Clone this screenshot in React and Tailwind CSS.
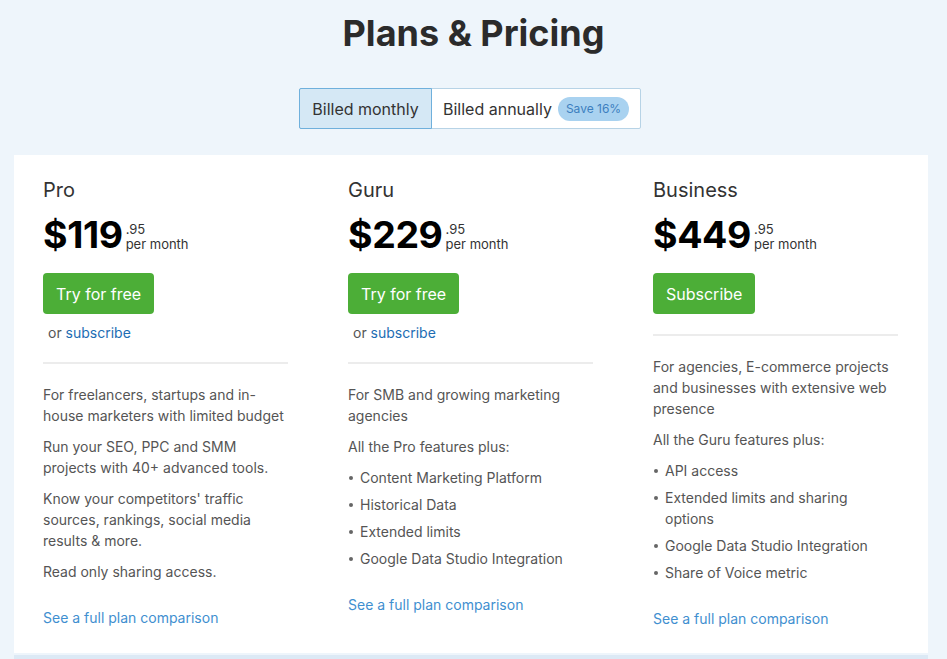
import React from 'react';

// Pricing page: title, billing toggle and three plan columns inside one card.

const plans = [
  {
    name: 'Pro',
    price: '$119',
    cta: 'Try for free',
    alt: true,
    paras: [
      'For freelancers, startups and in-house marketers with limited budget',
      'Run your SEO, PPC and SMM projects with 40+ advanced tools.',
      "Know your competitors' traffic sources, rankings, social media results & more.",
      'Read only sharing access.',
    ],
    bullets: [],
  },
  {
    name: 'Guru',
    price: '$229',
    cta: 'Try for free',
    alt: true,
    paras: ['For SMB and growing marketing agencies', 'All the Pro features plus:'],
    bullets: ['Content Marketing Platform', 'Historical Data', 'Extended limits', 'Google Data Studio Integration'],
  },
  {
    name: 'Business',
    price: '$449',
    cta: 'Subscribe',
    alt: false,
    paras: [
      'For agencies, E-commerce projects and businesses with extensive web presence',
      'All the Guru features plus:',
    ],
    bullets: ['API access', 'Extended limits and sharing options', 'Google Data Studio Integration', 'Share of Voice metric'],
  },
];

function Plan({ plan }) {
  return (
    <div className="flex flex-col">
      <div className="text-[20px] leading-[26px] text-[#333]">{plan.name}</div>
      <div className="mt-[10px] flex items-center h-[44px]">
        <span className="text-[37.5px] leading-[44px] font-bold text-black tracking-[-0.4px]">{plan.price}</span>
        <span className="ml-[3px] flex flex-col text-[13px] leading-[15px] text-[#333] mt-[4px]">
          <span>.95</span>
          <span>per month</span>
        </span>
      </div>
      <div className="mt-[16px]">
        <button className="h-[41px] px-[13px] rounded-[4px] bg-[#4cae37] text-white text-[16px]">{plan.cta}</button>
      </div>
      {plan.alt && (
        <div className="mt-[8px] pl-[5px] text-[14px] leading-[21px] text-[#555]">
          or <span className="text-[#1d6db3]">subscribe</span>
        </div>
      )}
      <div className={`${plan.alt ? 'mt-[19px]' : 'mt-[20px]'} h-[2px] bg-[#ececec]`} />
      <div className="mt-[20px] flex flex-col gap-[10px] text-[14px] leading-[21px] text-[#555]">
        {plan.paras.map((p) => (
          <p key={p}>{p}</p>
        ))}
        {plan.bullets.length > 0 && (
          <ul className="flex flex-col gap-[6px]">
            {plan.bullets.map((b) => (
              <li key={b} className="flex">
                <span className="w-[12px] shrink-0 flex pt-[9px] pl-[1px]">
                  <span className="w-[4px] h-[4px] rounded-full bg-[#666]" />
                </span>
                <span>{b}</span>
              </li>
            ))}
          </ul>
        )}
      </div>
      <div className="mt-[25px] text-[14px] leading-[21px] text-[#3f8fd0]">See a full plan comparison</div>
    </div>
  );
}

export default function App() {
  return (
    <div className="h-[659px] bg-[#eef5fb] font-['Inter',sans-serif] overflow-hidden">
      <h1 className="pt-[11px] text-center text-[36px] leading-[44px] font-bold text-[#2b2b2b]">Plans &amp; Pricing</h1>
      <div className="mt-[33px] flex justify-center pr-[7px]">
        <div className="flex h-[41px] border border-[#b7d3e6] bg-white rounded-[2px]">
          <div className="w-[133px] flex items-center justify-center bg-[#d5e8f5] border border-[#6fb0dc] -m-px rounded-l-[2px] text-[16px] text-[#333]">
            Billed monthly
          </div>
          <div className="w-[209px] flex items-center pl-[12px] text-[16px] text-[#333]">
            Billed annually
            <span className="ml-[6px] h-[24px] px-[8px] flex items-center rounded-full bg-[#a9d2f0] text-[12px] text-[#3c7fbf]">
              Save 16%
            </span>
          </div>
        </div>
      </div>
      <div className="mt-[26px] ml-[14px] w-[914px] bg-white pl-[29px] pr-[30px] pt-[22px] pb-[24px]">
        <div className="grid grid-cols-3 gap-[60px]">
          {plans.map((p) => (
            <Plan key={p.name} plan={p} />
          ))}
        </div>
      </div>
      <div className="mt-[2px] ml-[14px] w-[914px] h-[40px] bg-[#dce9f5]" />
    </div>
  );
}
